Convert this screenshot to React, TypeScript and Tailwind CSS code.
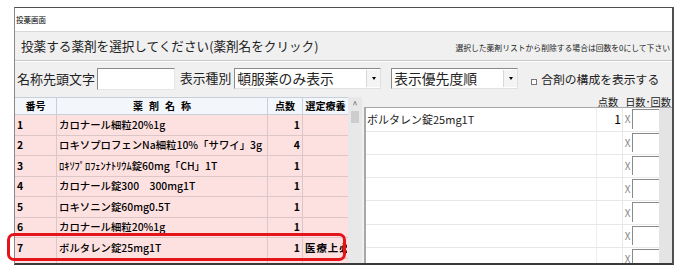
import React from "react";

const rows = [
  { no: "1", name: "カロナール細粒20%1g", pt: "1", sel: "" },
  { no: "2", name: "ロキソプロフェンNa細粒10%「サワイ」3g", pt: "4", sel: "" },
  { no: "3", name: "ﾛｷｿﾌﾟﾛﾌｪﾝﾅﾄﾘｳﾑ錠60mg「CH」1T", pt: "1", sel: "" },
  { no: "4", name: "カロナール錠300　300mg1T", pt: "1", sel: "" },
  { no: "5", name: "ロキソニン錠60mg0.5T", pt: "1", sel: "" },
  { no: "6", name: "カロナール細粒20%1g", pt: "1", sel: "" },
  { no: "7", name: "ボルタレン錠25mg1T", pt: "1", sel: "医療上必要" },
  { no: "8", name: "ロキソニン錠60mg1T", pt: "1", sel: "" },
];

const right = [
  { name: "ボルタレン錠25mg1T", pt: "1" },
  { name: "", pt: "" },
  { name: "", pt: "" },
  { name: "", pt: "" },
  { name: "", pt: "" },
  { name: "", pt: "" },
  { name: "", pt: "" },
];

export default function App() {
  return (
    <div
      className="relative w-[688px] h-[274px] bg-white overflow-hidden text-black"
      style={{ fontFamily: '"Noto Sans CJK JP", "Noto Sans", sans-serif' }}
    >
      <div className="ml-[14px] mt-[7px] w-[660px] h-[258px] border-t border-t-[#505050] border-l border-l-[#8a8a8a] border-r-2 border-r-[#505050] border-b-2 border-b-[#3a3a3a] flex flex-col overflow-hidden">
        {/* title bar */}
        <div className="h-[23px] bg-white flex items-center pl-[1px] text-[7.5px] leading-none">投薬画面</div>
        {/* body */}
        <div className="flex-1 bg-[#f0f0f0] border-t border-[#d8d8d8] flex flex-col overflow-hidden">
          {/* header */}
          <div className="h-[29px] flex items-end justify-between pl-[6px] pr-[2px] border-b border-[#c8c8c8]">
            <div className="text-[12.6px] leading-none pb-[7px] text-[#222]">投薬する薬剤を選択してください(薬剤名をクリック)</div>
            <div className="text-[7.8px] leading-none pb-[8px] text-[#222]">選択した薬剤リストから削除する場合は回数を0にして下さい</div>
          </div>
          {/* controls */}
          <div className="h-[34px] flex items-center pl-[2px] border-t border-white">
            <span className="text-[13px] leading-none text-[#222]">名称先頭文字</span>
            <div className="ml-[2px] w-[78px] h-[22px] bg-white border-t border-l border-t-[#8a8a8a] border-l-[#8a8a8a] border-b border-r border-b-[#e6e6e6] border-r-[#e6e6e6]" />
            <span className="ml-[5px] text-[12.8px] leading-none text-[#222]">表示種別</span>
            <div className="ml-[3px] w-[147px] h-[21px] bg-white border-t border-l border-t-[#8a8a8a] border-l-[#8a8a8a] border-b border-r border-b-[#e0e0e0] border-r-[#e0e0e0] flex items-center">
              <span className="flex-1 pl-[2px] text-[13.8px] leading-none text-[#222]">頓服薬のみ表示</span>
              <div className="w-[14px] h-[17px] bg-[#f4f4f4] border-l border-[#d8d8d8] flex items-center justify-center">
                <div className="w-0 h-0 border-l-[2.5px] border-r-[2.5px] border-t-[3px] border-l-transparent border-r-transparent border-t-black" />
              </div>
            </div>
            <div className="ml-[10px] w-[127px] h-[21px] bg-white border-t border-l border-t-[#8a8a8a] border-l-[#8a8a8a] border-b border-r border-b-[#e0e0e0] border-r-[#e0e0e0] flex items-center">
              <span className="flex-1 pl-[2px] text-[13.8px] leading-none text-[#222]">表示優先度順</span>
              <div className="w-[14px] h-[17px] bg-[#f4f4f4] border-l border-[#d8d8d8] flex items-center justify-center">
                <div className="w-0 h-0 border-l-[2.5px] border-r-[2.5px] border-t-[3px] border-l-transparent border-r-transparent border-t-black" />
              </div>
            </div>
            <div className="ml-[13px] mt-[6px] w-[6px] h-[6px] border border-[#777] bg-white" />
            <span className="ml-[4px] text-[11.8px] leading-none text-[#222]">合剤の構成を表示する</span>
          </div>
          {/* tables */}
          <div className="flex-1 flex mt-[2px] overflow-hidden">
            {/* left table */}
            <div className="w-[333px] flex flex-col">
              <div className="h-[18px] shrink-0 flex bg-[#f3f6fb] border-y border-[#c9cfd8] text-[10px] font-bold leading-none">
                <div className="w-[42px] flex items-center justify-center border-r border-[#c9cfd8]">番号</div>
                <div className="w-[211px] flex items-center justify-center border-r border-[#c9cfd8] tracking-[6px] pl-[6px]">薬剤名称</div>
                <div className="w-[35px] flex items-center justify-center border-r border-[#c9cfd8]">点数</div>
                <div className="flex-1 flex items-center justify-center whitespace-nowrap">選定療養</div>
              </div>
              {rows.map((r) => (
                <div key={r.no} className="h-[20.5px] shrink-0 flex bg-[#fde0e0] border-b border-[#dcc6c6] text-[10.4px] font-medium leading-none">
                  <div className="w-[42px] flex items-center pl-[2px] border-r border-[#dcc6c6] font-bold">{r.no}</div>
                  <div className="w-[211px] flex items-center pl-[2px] border-r border-[#dcc6c6] whitespace-nowrap">{r.name}</div>
                  <div className="w-[35px] flex items-center justify-end pr-[2px] border-r border-[#dcc6c6] font-bold">{r.pt}</div>
                  <div className="w-[44px] flex items-center pl-[2px] whitespace-nowrap overflow-hidden font-bold tracking-[1px]">{r.sel}</div>
                </div>
              ))}
            </div>
            {/* scrollbar */}
            <div className="w-[14px] bg-[#e8e8e8] flex flex-col items-center">
              <div className="h-[14px] flex items-center justify-center text-[9px] leading-none text-[#555]">^</div>
              <div className="w-[8px] h-[12px] bg-[#cdcdcd]" />
            </div>
            <div className="w-[2px]" />
            {/* right panel */}
            <div className="flex-1 flex flex-col">
              <div className="h-[20px] flex items-center justify-end pr-[1px] text-[10.2px] leading-none text-[#222]">
                <span className="mr-[7px]">点数</span>
                <span>日数･回数</span>
              </div>
              <div className="flex-1 flex border-l-2 border-t border-[#a8a8a8]">
                <div className="flex-1 bg-white flex flex-col">
                  {right.map((r, i) => (
                    <div key={i} className="h-[23.3px] shrink-0 flex border-b border-[#e8e8e8]">
                      <div className="flex-1 flex items-center pl-[1px] text-[11px] leading-none text-[#222]">{r.name}</div>
                      <div className="w-[26px] flex items-center justify-end pr-[1px] border-l border-[#eeeeee] text-[12px] leading-none">{r.pt}</div>
                      <div className="w-[10px] flex items-center justify-center border-l border-[#e8e8e8] text-[10px] leading-none text-[#888]">X</div>
                      <div className="w-[27px] mt-[1px] mb-[2px] bg-white border-t border-l border-[#8a8a8a]" />
                    </div>
                  ))}
                </div>
                <div className="w-[13px] bg-[#e4e4e4]" />
              </div>
            </div>
          </div>
        </div>
      </div>
      {/* highlight annotation */}
      <div className="absolute left-[7px] top-[233px] w-[339px] h-[28px] border-[3px] border-[#e5131a] rounded-[7px]" />
    </div>
  );
}
